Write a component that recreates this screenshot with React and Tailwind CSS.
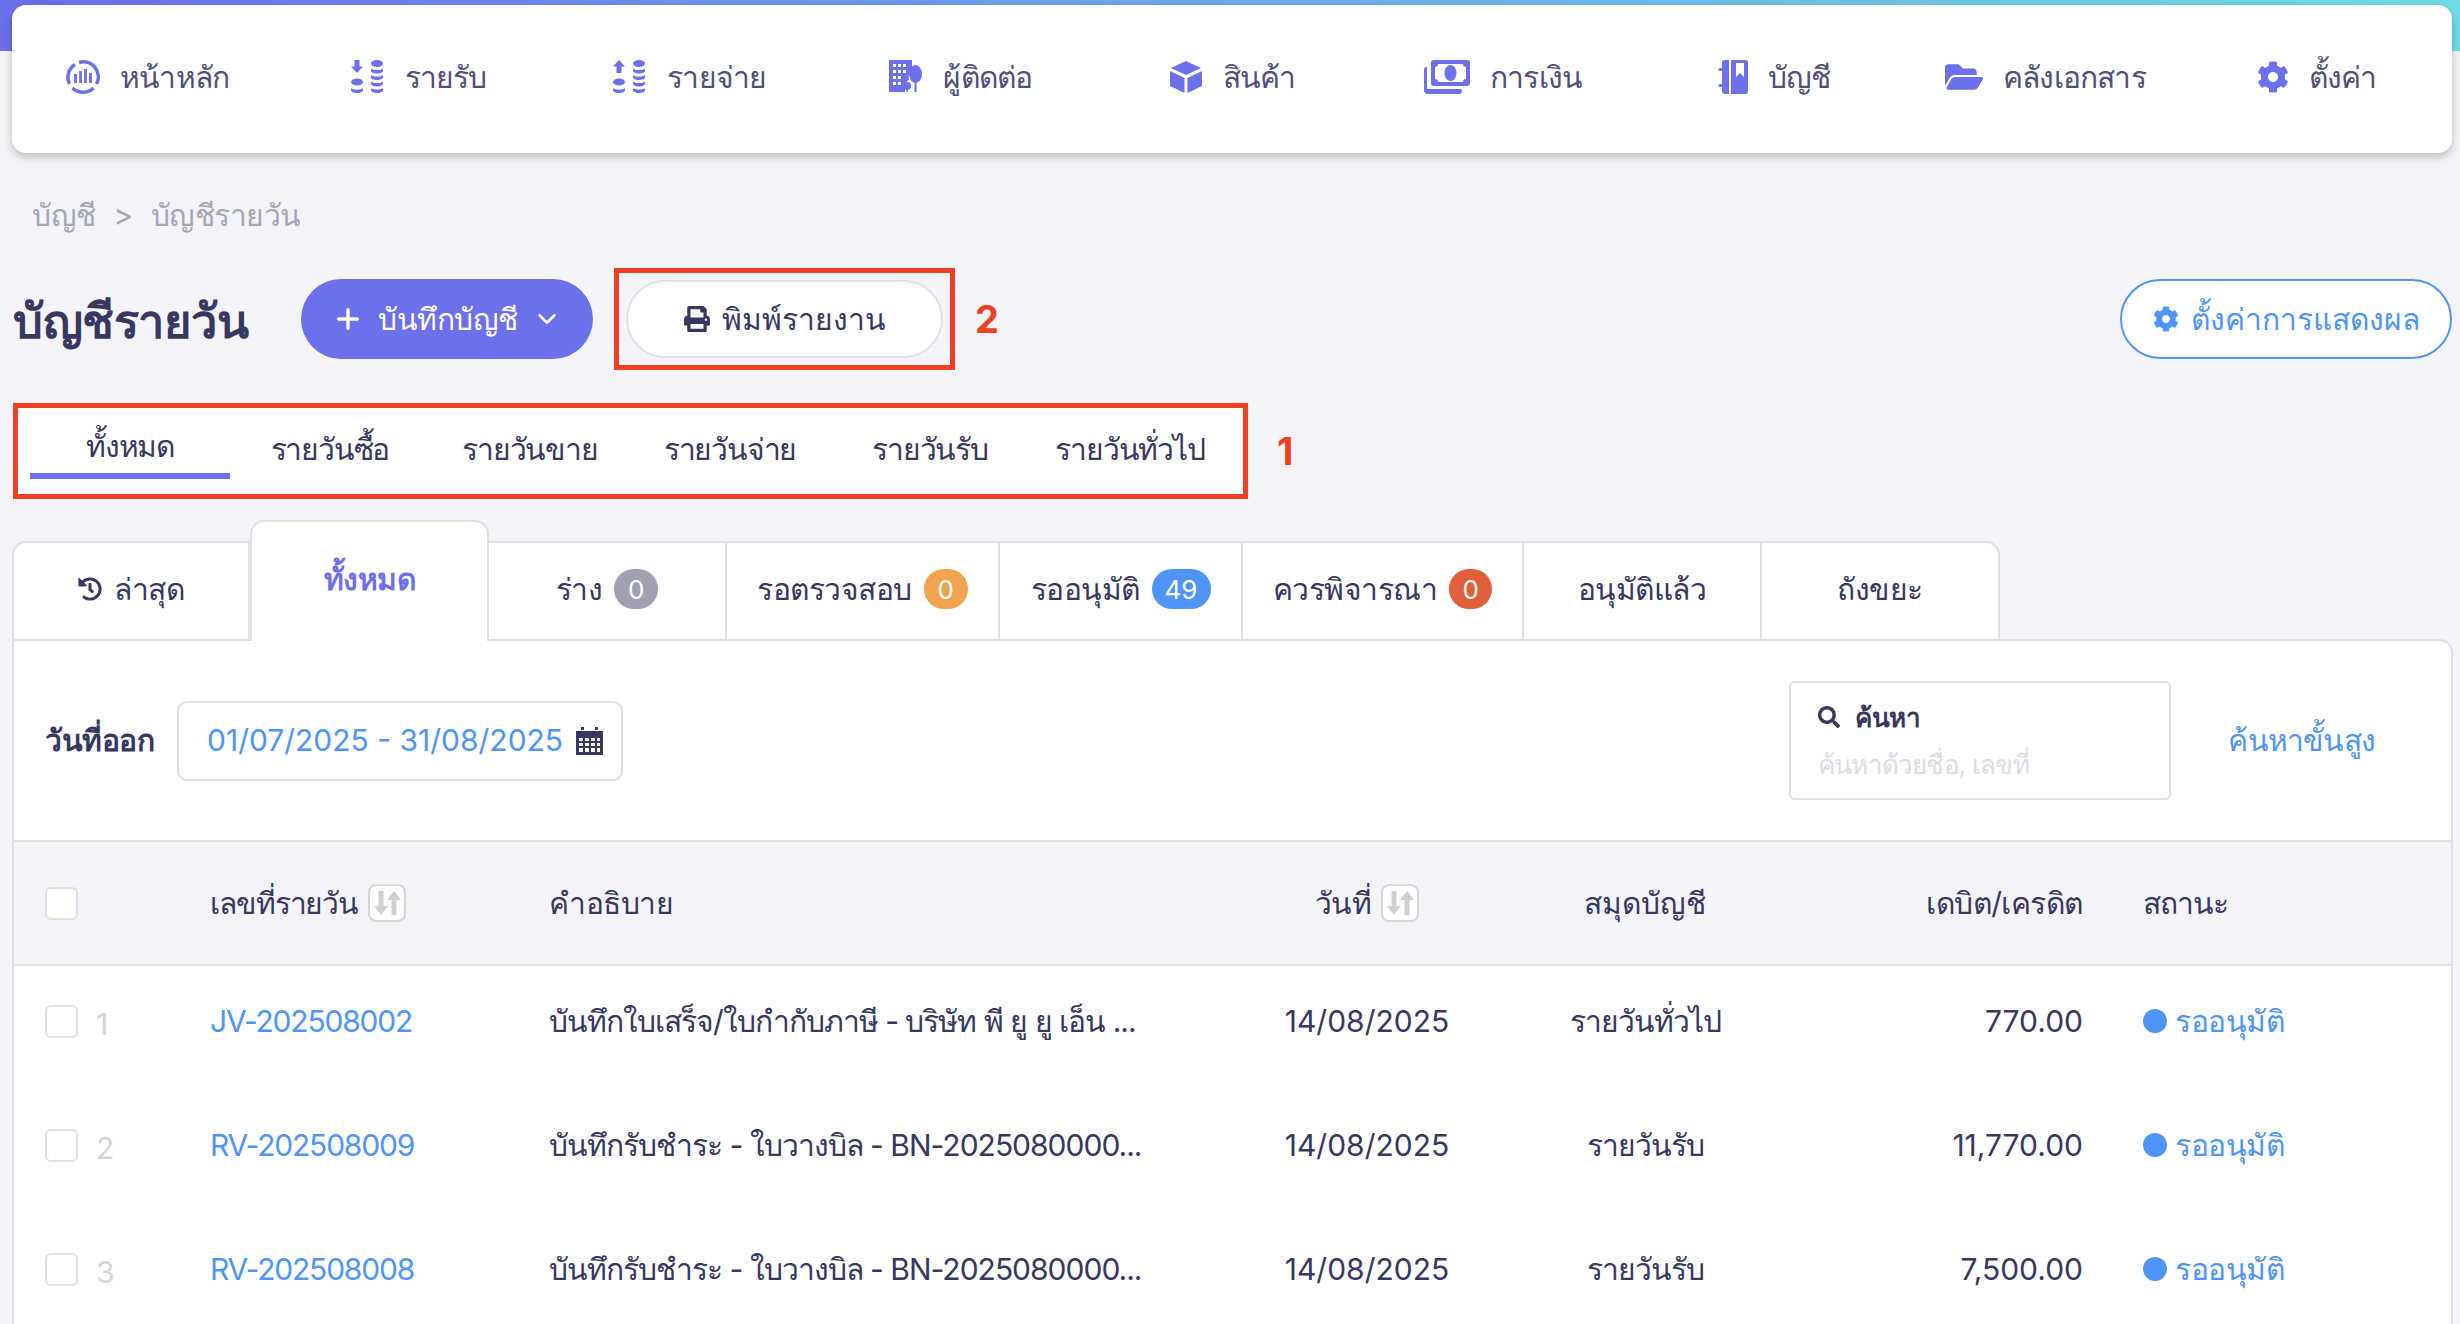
import { ChevronDown, Plus } from 'lucide-react'
import { FaCog, FaFolderOpen, FaHistory, FaPrint, FaSearch } from 'react-icons/fa'

const HomeIcon = () => (
  <svg width="34" height="34" viewBox="0 0 34 34" fill="none" stroke="#6c70ea" strokeWidth="3.5">
    <path d="M9 4.500A15 15 0 0 0 3.500 24" />
    <path d="M13 2.500A15 15 0 0 1 30.500 24" />
    <path d="M6.500 28A15 15 0 0 0 27.500 28" />
    <path d="M9.500 14v9M14.500 11v12M19.500 9v14M24.500 13v10" strokeWidth="2.800" />
  </svg>
)

const CoinsIcon = ({ up }) => (
  <svg width="34" height="34" viewBox="0 0 34 34" fill="#6c70ea">
    {up ? <path d="M6 0l6 6.500H8.500V13h-5V6.500H0z" /> : <path d="M3.500 0h5v6.500H12L6 13 0 6.500h3.500z" />}
    <ellipse cx="6" cy="22" rx="6" ry="3.500" />
    <path d="M0 28c2 2 10 2 12 0v2c0 4-12 4-12 0z" />
    <ellipse cx="26" cy="3.500" rx="6" ry="3.500" />
    <path d="M20 8.500c2 2 10 2 12 0v2c0 4-12 4-12 0zM20 15c2 2 10 2 12 0v2c0 4-12 4-12 0zM20 21.500c2 2 10 2 12 0v2c0 4-12 4-12 0zM20 28c2 2 10 2 12 0v2c0 4-12 4-12 0z" />
  </svg>
)

const ContactIcon = () => (
  <svg width="34" height="34" viewBox="0 0 34 34" fill="#6c70ea">
    <path fillRule="evenodd" d="M0 0h23v10c-3 2-4 6-3 10-3 1-4 4-4 7v5H0zM4 4v3h3V4zm5 0v3h3V4zm5 0v3h3V4zM4 10v3h3v-3zm5 0v3h3v-3zm5 0v3h3v-3zM4 16v3h3v-3zm5 0v3h3v-3zM4 22v3h3v-3zm5 0v3h3v-3z" />
    <ellipse cx="26.500" cy="14" rx="6.500" ry="9" />
    <path d="M25.500 20h2v12h-2z" />
    <circle cx="18" cy="26" r="4" />
    <path d="M17.300 27h1.500v5h-1.500z" />
  </svg>
)

const CubeIcon = () => (
  <svg width="34" height="34" viewBox="0 0 34 34" fill="#6c70ea">
    <path d="M17 1l15 7-15 7L2 8z" />
    <path d="M1 11l14.500 7v15L1 26z" />
    <path d="M33 11l-14.500 7v15L33 26z" />
  </svg>
)

const MoneyIcon = () => (
  <svg width="46" height="34" viewBox="0 0 46 34" fill="#6c70ea">
    <path fillRule="evenodd" d="M10 0h33a3 3 0 0 1 3 3v20a3 3 0 0 1-3 3H10a3 3 0 0 1-3-3V3a3 3 0 0 1 3-3zm4 4q0 3-3 3v12q3 0 3 3h25q0-3 3-3V7q-3 0-3-3z" />
    <ellipse cx="26.500" cy="13" rx="6" ry="8" />
    <path d="M0 10a3 3 0 0 1 3-3v22h34a3 3 0 0 1-3 5H4a4 4 0 0 1-4-4z" />
  </svg>
)

const BookIcon = () => (
  <svg width="30" height="34" viewBox="0 0 30 34" fill="#6c70ea">
    <path d="M4 3a3 3 0 0 1 3-3h4v34H7a3 3 0 0 1-3-3v-4H2a1.500 1.500 0 0 1 0-3h2V11H2a1.500 1.500 0 0 1 0-3h2z" />
    <path fillRule="evenodd" d="M13 0h14a3 3 0 0 1 3 3v28a3 3 0 0 1-3 3H13zm5 3v14l4-4 4 4V3z" />
  </svg>
)

const CalendarIcon = () => (
  <svg width="27" height="28" viewBox="0 0 27 28" fill="#37375f">
    <path d="M5 0h3v3H5zM19 0h3v3h-3z" />
    <path fillRule="evenodd" d="M0 4h27v24H0zM3 11v3h4v-3zm6 0v3h4v-3zm6 0v3h4v-3zm6 0v3h3v-3zM3 16v3h4v-3zm6 0v3h4v-3zm6 0v3h4v-3zm6 0v3h3v-3zM3 21v4h4v-4zm6 0v4h4v-4zm6 0v4h4v-4zm6 0v4h3v-4z" />
  </svg>
)

const SortIcon = () => (
  <span className="flex h-[38px] w-[38px] items-center justify-center rounded-lg border-2 border-[#d6d6d6] bg-white">
    <svg width="30" height="28" viewBox="0 0 30 28" fill="#d0d0d0">
      <path d="M6.500 2h5v15H16l-7 9-7-9h4.500z" />
      <path d="M22 2l7 9h-4.500v15h-5V11H15z" />
    </svg>
  </span>
)

const navItems = [
  { label: 'หน้าหลัก', icon: <HomeIcon /> },
  { label: 'รายรับ', icon: <CoinsIcon /> },
  { label: 'รายจ่าย', icon: <CoinsIcon up /> },
  { label: 'ผู้ติดต่อ', icon: <ContactIcon /> },
  { label: 'สินค้า', icon: <CubeIcon /> },
  { label: 'การเงิน', icon: <MoneyIcon /> },
  { label: 'บัญชี', icon: <BookIcon /> },
  { label: 'คลังเอกสาร', icon: <FaFolderOpen size={38} color="#6c70ea" /> },
  { label: 'ตั้งค่า', icon: <FaCog size={32} color="#6c70ea" /> },
]

const journalTabs = ['ทั้งหมด', 'รายวันซื้อ', 'รายวันขาย', 'รายวันจ่าย', 'รายวันรับ', 'รายวันทั่วไป']

const rows = [
  { no: 1, code: 'JV-202508002', desc: 'บันทึกใบเสร็จ/ใบกำกับภาษี - บริษัท พี ยู ยู เอ็น ...', book: 'รายวันทั่วไป', amount: '770.00' },
  { no: 2, code: 'RV-202508009', desc: 'บันทึกรับชำระ - ใบวางบิล - BN-2025080000...', book: 'รายวันรับ', amount: '11,770.00' },
  { no: 3, code: 'RV-202508008', desc: 'บันทึกรับชำระ - ใบวางบิล - BN-2025080000...', book: 'รายวันรับ', amount: '7,500.00' },
]

const Badge = ({ className, children }) => (
  <span className={`flex h-[40px] items-center justify-center rounded-full text-[26px] tracking-normal text-white ${className}`}>{children}</span>
)

const StatusTab = ({ className, children }) => (
  <div className={`flex h-[98px] items-center justify-center gap-[12px] border-t-2 border-r-2 border-[#dfdfe8] bg-white pb-[4px] ${className}`}>
    {children}
  </div>
)

const gridCols = 'grid grid-cols-[196px_339px_676px_284px_272px_302px_1fr] items-center'

export default function App() {
  return (
    <div className="h-[1324px] overflow-hidden bg-[#f3f3f8] font-['Inter','Noto_Sans',sans-serif] text-[30px] tracking-[-0.5px] text-[#37375f]">
      <div className="h-[51px] bg-gradient-to-r from-[#6c6fea] to-[#6fdce5]" />
      <nav className="relative mx-[12px] -mt-[46px] grid h-[148px] w-[2440px] grid-cols-9 rounded-[14px] bg-white pb-[4px] shadow-[0_4px_8px_rgba(0,0,0,0.22)]">
        {navItems.map((item) => (
          <div key={item.label} className="flex items-center justify-center gap-[20px] tracking-[-0.8px] text-[#50507a]">
            {item.icon}
            <span>{item.label}</span>
          </div>
        ))}
      </nav>

      <div className="mt-[40px] flex h-[44px] items-center gap-[18px] pl-[32px] text-[#a5a5b8]">
        <span>บัญชี</span>
        <span>&gt;</span>
        <span>บัญชีรายวัน</span>
      </div>

      <div className="mt-[31px] flex items-center pl-[13px] pr-[8px]">
        <h1 className="mt-[4px] w-[288px] text-[47px] font-semibold">บัญชีรายวัน</h1>
        <button className="flex h-[80px] w-[292px] items-center justify-center gap-[14px] rounded-full bg-[#6c70ea] text-white">
          <Plus size={32} strokeWidth={2.5} />
          <span>บันทึกบัญชี</span>
          <ChevronDown size={30} />
        </button>
        <div className="ml-[21px] border-[5px] border-[#ee4123] p-[7px]">
          <button className="flex h-[78px] w-[317px] items-center justify-center gap-[12px] rounded-full border-2 border-[#dfdfe8] bg-white tracking-normal">
            <FaPrint size={26} />
            <span>พิมพ์รายงาน</span>
          </button>
        </div>
        <span className="ml-[20px] text-[38px] font-bold text-[#ee4123]">2</span>
        <button className="ml-auto flex h-[80px] w-[332px] items-center justify-center gap-[12px] rounded-full border-2 border-[#4f95f8] bg-white tracking-normal text-[#4f95f8]">
          <FaCog size={26} />
          <span>ตั้งค่าการแสดงผล</span>
        </button>
      </div>

      <div className="mt-[33px] flex items-center">
        <div className="ml-[13px] flex h-[96px] w-[1235px] items-start border-[5px] border-[#ee4123] bg-white pl-[12px]">
          {journalTabs.map((tab, i) => (
            <div key={tab} className={`flex h-[71px] w-[200px] items-center justify-center pt-[12px] tracking-[-1.2px] ${i === 0 ? 'border-b-[6px] border-[#6c70ea]' : ''}`}>
              {tab}
            </div>
          ))}
        </div>
        <span className="ml-[29px] text-[38px] font-bold text-[#ee4123]">1</span>
      </div>

      <div className="relative z-10 ml-[12px] mt-[21px] flex items-end">
        <StatusTab className="w-[238px] gap-[6px] rounded-tl-[14px] border-l-2">
          <FaHistory size={24} />
          <span>ล่าสุด</span>
        </StatusTab>
        <div className="-mb-[2px] flex h-[121px] w-[239px] items-center justify-center rounded-t-[14px] border-x-2 border-t-2 border-[#dfdfe8] bg-white pb-[4px] font-semibold text-[#6c70ea]">
          ทั้งหมด
        </div>
        <StatusTab className="w-[238px]">
          <span>ร่าง</span>
          <Badge className="w-[44px] bg-[#a0a0b2]">0</Badge>
        </StatusTab>
        <StatusTab className="w-[273px]">
          <span>รอตรวจสอบ</span>
          <Badge className="w-[44px] bg-[#f2a34f]">0</Badge>
        </StatusTab>
        <StatusTab className="w-[243px]">
          <span>รออนุมัติ</span>
          <Badge className="w-[59px] bg-[#4f95f8]">49</Badge>
        </StatusTab>
        <StatusTab className="w-[281px]">
          <span>ควรพิจารณา</span>
          <Badge className="w-[43px] bg-[#e0603a]">0</Badge>
        </StatusTab>
        <StatusTab className="w-[238px]">อนุมัติแล้ว</StatusTab>
        <StatusTab className="w-[238px] rounded-tr-[14px]">ถังขยะ</StatusTab>
      </div>

      <div className="ml-[12px] h-[800px] w-[2441px] rounded-tr-[14px] border-x-2 border-t-2 border-[#dfdfe8] bg-white">
        <div className="flex h-[199px] items-center pl-[31px] pr-[76px]">
          <span className="w-[132px] font-semibold">วันที่ออก</span>
          <div className="flex h-[80px] w-[446px] items-center justify-between rounded-[10px] border-2 border-[#dfdfe8] pl-[28px] pr-[18px] tracking-normal text-[#4f95f8]">
            <span>01/07/2025 - 31/08/2025</span>
            <CalendarIcon />
          </div>
          <div className="ml-auto flex h-[119px] w-[382px] flex-col justify-center gap-[8px] rounded-[6px] border-2 border-[#dfdfe8] pl-[27px]">
            <div className="flex items-center gap-[15px] text-[26px] font-semibold">
              <FaSearch size={22} />
              <span>ค้นหา</span>
            </div>
            <span className="text-[26px] tracking-[-0.8px] text-[#dcdce4]">ค้นหาด้วยชื่อ, เลขที่</span>
          </div>
          <span className="w-[204px] text-right tracking-[-0.8px] text-[#4f95f8]">ค้นหาขั้นสูง</span>
        </div>

        <div className={`${gridCols} h-[126px] border-y-2 border-[#dfdfe8] bg-[#f4f4f8]`}>
          <div className="pl-[31px]">
            <span className="block h-[33px] w-[33px] rounded-md border-2 border-[#dfdfe8] bg-white" />
          </div>
          <div className="flex items-center gap-[10px]">
            <span className="tracking-[-1.1px]">เลขที่รายวัน</span>
            <SortIcon />
          </div>
          <div>คำอธิบาย</div>
          <div className="flex items-center justify-center gap-[10px]">
            <span>วันที่</span>
            <SortIcon />
          </div>
          <div className="text-center tracking-normal">สมุดบัญชี</div>
          <div className="text-right">เดบิต/เครดิต</div>
          <div className="pl-[60px] tracking-[-1px]">สถานะ</div>
        </div>

        <div className="-mt-[7px]">
          {rows.map((row) => (
            <div key={row.code} className={`${gridCols} h-[124px]`}>
              <div className="flex items-center gap-[18px] pl-[31px]">
                <span className="block h-[33px] w-[33px] rounded-md border-2 border-[#dfdfe8] bg-white" />
                <span className="mt-[6px] text-[#d5d5d5]">{row.no}</span>
              </div>
              <div className="tracking-[-1.2px] text-[#4f95f8]">{row.code}</div>
              <div className="tracking-[-1px]">{row.desc}</div>
              <div className="text-center tracking-normal">14/08/2025</div>
              <div className="text-center tracking-[-1px]">{row.book}</div>
              <div className="text-right tracking-normal">{row.amount}</div>
              <div className="flex items-center gap-[8px] pl-[60px] text-[#4f95f8]">
                <span className="h-[24px] w-[24px] rounded-full bg-[#4f95f8]" />
                <span>รออนุมัติ</span>
              </div>
            </div>
          ))}
        </div>
      </div>
    </div>
  )
}
